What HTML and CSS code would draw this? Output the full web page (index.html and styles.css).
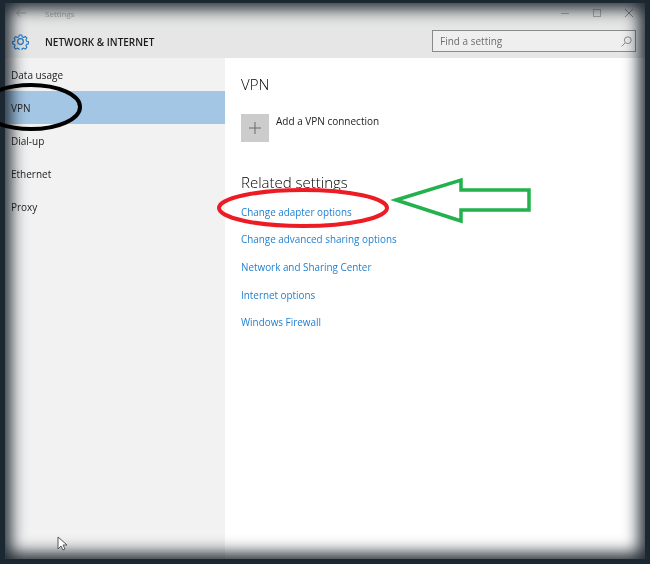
FILE: index.html
```html
<!DOCTYPE html>
<html lang="en">
<head>
<meta charset="utf-8">
<title>Settings</title>
<link rel="stylesheet" href="styles.css">
</head>
<body>
<div class="frame">
  <div class="window">
    <div class="titlebar">
      <svg class="back" width="10" height="8" viewBox="0 0 10 8"><path d="M4 .5 .8 4 4 7.500M.8 4H10" fill="none" stroke="#b0b0b0"/></svg>
      <span class="title">Settings</span>
      <div class="controls">
        <svg width="8" height="8" viewBox="0 0 8 8"><path d="M0 4.500h8" stroke="#a8a8a8"/></svg>
        <svg width="8" height="8" viewBox="0 0 8 8"><rect x=".5" y=".5" width="7" height="7" fill="none" stroke="#a8a8a8"/></svg>
        <svg width="8" height="8" viewBox="0 0 8 8"><path d="m0 0 8 8M8 0 0 8" stroke="#8a8a8a"/></svg>
      </div>
    </div>
    <header class="header">
      <svg class="gear" width="17" height="17" viewBox="0 0 24 24" fill="none" stroke="#1e78c8" stroke-width="1.700" stroke-linejoin="round"><path d="M10 1.500h4l.7 3 2.300 1 2.700-1.600 2.600 2.800-1.600 2.600 1 2.200 3 .7v3.600l-3 .7-1 2.300 1.600 2.600-2.800 2.800-2.600-1.600-2.200 1-.7 3h-4l-.7-3-2.200-1-2.700 1.600-2.700-2.800 1.600-2.600-1-2.300-3-.7v-3.600l3-.7 1-2.200-1.600-2.700L4.300 4l2.700 1.600 2.300-1z" transform="translate(12 12) scale(.88) translate(-12 -12)"/><circle cx="12" cy="12" r="4"/></svg>
      <h1 class="heading">NETWORK &amp; INTERNET</h1>
      <div class="search">
        <span class="search-text">Find a setting</span>
        <svg width="11" height="11" viewBox="0 0 11 11" fill="none" stroke="#8c8c8c"><circle cx="6.800" cy="4.200" r="3.400"/><path d="M4.300 6.700.6 10.400"/></svg>
      </div>
    </header>
    <div class="body">
      <nav class="sidebar">
        <a class="nav-item">Data usage</a>
        <a class="nav-item active">VPN</a>
        <a class="nav-item">Dial-up</a>
        <a class="nav-item">Ethernet</a>
        <a class="nav-item">Proxy</a>
      </nav>
      <main class="content">
        <h2 class="section-title">VPN</h2>
        <div class="add-row">
          <span class="add-tile"><svg width="12" height="12" viewBox="0 0 12 12"><path d="M6 0v12M0 6h12" stroke="#6b6b6b"/></svg></span>
          <span class="add-label">Add a VPN connection</span>
        </div>
        <h2 class="section-title related">Related settings</h2>
        <ul class="links">
          <li><a class="link">Change adapter options</a></li>
          <li><a class="link">Change advanced sharing options</a></li>
          <li><a class="link">Network and Sharing Center</a></li>
          <li><a class="link">Internet options</a></li>
          <li><a class="link">Windows Firewall</a></li>
        </ul>
      </main>
    </div>
  </div>
  <div class="vignette"></div>
  <svg class="notes" width="650" height="564" viewBox="0 0 650 564" fill="none">
    <ellipse cx="31" cy="107" rx="49" ry="22" stroke="#000" stroke-width="4"/>
    <ellipse cx="303" cy="208" rx="84" ry="18" stroke="#ed1c24" stroke-width="4"/>
    <path d="M396 200 461 180V190H529V210H461V221Z" stroke="#22b14c" stroke-width="3.500"/>
    <path d="M58 537v12l3-3 2 4 2-1-2-4h4z" fill="#fff" stroke="#555"/>
  </svg>
</div>
</body>
</html>
```
FILE: styles.css
```css
* { box-sizing: border-box; }
html, body { margin: 0; padding: 0; }
body { font-family: "Open Sans", "Noto Sans", sans-serif; }
.frame {
  position: relative;
  width: 650px;
  height: 564px;
  padding: 3px 5px 5px 5px;
  background: #1b2831;
  overflow: hidden;
}
.window { display: flex; flex-direction: column; height: 100%; background: #fff; filter: blur(.35px); }
.titlebar {
  display: flex;
  align-items: center;
  height: 22px;
  padding-left: 11px;
  background: #e6e6e6;
  flex: none;
}
.back { margin-right: 19px; margin-bottom: 2px; }
.title { font-size: 8px; color: #a5a5a5; margin-bottom: 2px; }
.controls { display: flex; gap: 24px; margin-left: auto; padding-right: 12px; margin-bottom: 2px; }
.header {
  display: flex;
  align-items: center;
  height: 33px;
  padding-left: 7px;
  padding-right: 9px;
  background: #e6e6e6;
  flex: none;
}
.gear { margin-right: 16px; }
.heading { margin: 0; font-size: 10px; font-weight: 600; color: #1a1a1a; }
.search {
  display: flex;
  align-items: center;
  justify-content: space-between;
  width: 204px;
  height: 22px;
  margin-left: auto;
  margin-bottom: 1px;
  padding: 0 3px 0 7px;
  background: #efefef;
  border: 1px solid #8a8a8a;
}
.search-text { font-size: 10px; color: #6e6e6e; }
.body { display: flex; flex: 1; min-height: 0; }
.sidebar {
  display: flex;
  flex-direction: column;
  width: 220px;
  background: #f2f2f2;
  flex: none;
}
.nav-item {
  display: flex;
  align-items: center;
  height: 33px;
  padding-left: 6px;
  font-size: 10px;
  color: #222;
}
.nav-item.active { background: #a4c6e5; }
.content { flex: 1; padding: 16px 0 0 16px; background: #fff; }
.section-title { margin: 0; font-size: 15px; font-weight: 300; line-height: 20px; color: #000; }
.add-row { display: flex; gap: 7px; margin-top: 20px; }
.add-tile {
  display: flex;
  align-items: center;
  justify-content: center;
  width: 28px;
  height: 28px;
  background: #cccccc;
}
.add-label { font-size: 10px; line-height: 14px; color: #222; }
.related { margin-top: 30px; }
.links { margin: 6px 0 0; padding: 0; list-style: none; }
.links li { height: 27.600px; display: flex; align-items: center; }
.link { font-size: 9.900px; color: #1f7fd1; }
.vignette {
  position: absolute;
  inset: 3px 5px 5px 5px;
  box-shadow: inset 0 0 16px 6px rgba(20, 30, 38, .95);
  pointer-events: none;
}
.notes { position: absolute; top: 0; left: 0; pointer-events: none; }
```
